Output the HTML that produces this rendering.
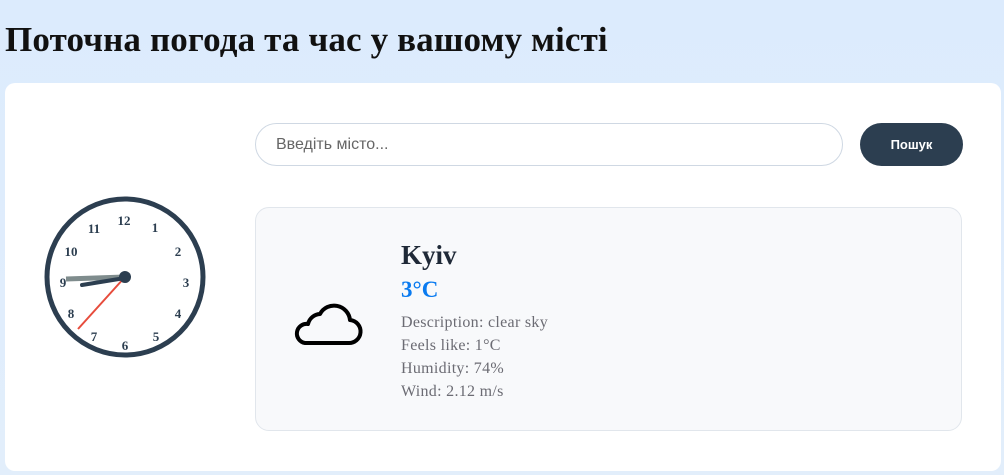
<!DOCTYPE html>
<html><head><meta charset="utf-8"><style>
body{margin:0;width:1004px;height:475px;overflow:hidden;background:linear-gradient(180deg,#dcebfd,#e2eefb);font-family:"Liberation Serif",serif;position:relative}
h1{position:absolute;left:5px;top:20px;margin:0;font-size:35px;font-weight:bold;color:#111;letter-spacing:0.15px}
.card{position:absolute;left:5px;top:83px;width:996px;height:388px;background:#fff;border-radius:10px}
.inp{position:absolute;left:255px;top:123px;width:588px;height:43px;border:1px solid #cfd8e3;border-radius:22px;box-sizing:border-box;font-family:"Liberation Sans",sans-serif;font-size:16px;color:#666;padding:12px 0 0 20px}
.btn{position:absolute;left:860px;top:123px;width:103px;height:43px;background:#2c3e50;border-radius:22px;color:#fff;font-family:"Liberation Sans",sans-serif;font-weight:bold;font-size:13px;text-align:center;line-height:43px}
.w{position:absolute;left:255px;top:207px;width:707px;height:224px;background:#f8f9fb;border:1px solid #e1e6ec;border-radius:14px;box-sizing:border-box}
.city{position:absolute;left:401px;top:240px;font-size:27px;font-weight:bold;color:#1f2937}
.temp{position:absolute;left:401px;top:277px;font-size:23px;font-weight:bold;color:#0a7bf0}
.d{position:absolute;left:401px;font-size:16px;letter-spacing:0.3px;color:#6b6b73}
</style></head><body>
<h1>Поточна погода та час у вашому місті</h1>
<div class="card"></div>
<div class="inp">Введіть місто...</div>
<div class="btn">Пошук</div>
<svg style="position:absolute;left:0;top:0" width="260" height="475">
<circle cx="125" cy="277" r="78" fill="#fff" stroke="#2c3e50" stroke-width="5"/>
<g font-family="Liberation Serif,serif" font-weight="bold" font-size="13" fill="#2c3e50" text-anchor="middle">
<text x="124" y="225">12</text><text x="155" y="232">1</text><text x="178" y="256">2</text><text x="186" y="287">3</text><text x="178" y="318">4</text><text x="156" y="341">5</text><text x="125" y="350">6</text><text x="94" y="341">7</text><text x="71" y="318">8</text><text x="63" y="287">9</text><text x="71" y="256">10</text><text x="94" y="233">11</text>
</g>
<line x1="66" y1="279" x2="125" y2="277" stroke="#7f8c8d" stroke-width="5"/>
<line x1="82" y1="285" x2="125" y2="278" stroke="#2c3e50" stroke-width="4" stroke-linecap="round"/>
<line x1="78" y1="329" x2="125" y2="277" stroke="#e74c3c" stroke-width="2"/>
<circle cx="125" cy="277" r="6" fill="#2c3e50"/>
</svg>
<div class="w"></div>
<svg style="position:absolute;left:292px;top:298px" width="72" height="50" viewBox="0 0 72 50">
<path d="M13 45 H56 A11.5 11.5 0 0 0 58 22 A16 16 0 0 0 28 16 A13 13 0 0 0 16 26 A9.5 9.5 0 0 0 13 45 Z" fill="none" stroke="#000" stroke-width="4" stroke-linejoin="round"/>
</svg>
<div class="city">Kyiv</div>
<div class="temp">3°C</div>
<div class="d" style="top:314px">Description: clear sky</div>
<div class="d" style="top:337px">Feels like: 1°C</div>
<div class="d" style="top:360px">Humidity: 74%</div>
<div class="d" style="top:383px">Wind: 2.12 m/s</div>
</body></html>
